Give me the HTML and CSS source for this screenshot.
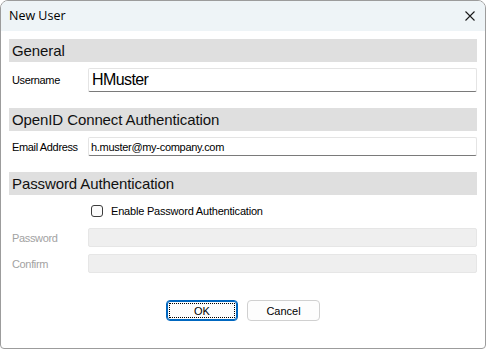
FILE: index.html
```html
<!DOCTYPE html>
<html>

<head>
  <meta name="viewport" content="width=device-width, initial-scale=1">
  <link rel="stylesheet" href="styles.css">
</head>

<body>
  <div class="window">
    <header class="titlebar">
      <span class="title">New User</span>
      <svg class="close" viewBox="0 0 10 10" width="10" height="10">
        <path d="M0.5 0.5 L9.5 9.5 M9.5 0.5 L0.5 9.5" />
      </svg>
    </header>

    <main class="content">
      <section class="group">
        <h2 class="band">General</h2>
        <div class="row row--big">
          <label class="label">Username</label>
          <input class="field field--big" type="text" value="HMuster">
        </div>
      </section>

      <section class="group">
        <h2 class="band">OpenID Connect Authentication</h2>
        <div class="row">
          <label class="label">Email Address</label>
          <input class="field" type="text" value="h.muster@my-company.com">
        </div>
      </section>

      <section class="group">
        <h2 class="band">Password Authentication</h2>
        <div class="row row--check">
          <span class="check"></span>
          <span class="check-text">Enable Password Authentication</span>
        </div>
        <div class="row">
          <label class="label label--off">Password</label>
          <input class="field field--off" type="password" disabled>
        </div>
        <div class="row row--tight">
          <label class="label label--off">Confirm</label>
          <input class="field field--off" type="password" disabled>
        </div>
      </section>

      <!-- OK has keyboard focus, hence the dotted rectangle -->
      <div class="buttons">
        <button class="btn btn--default"><span class="focus">OK</span></button>
        <button class="btn">Cancel</button>
      </div>
    </main>
  </div>
</body>

</html>
```

FILE: styles.css
```css
:root {
  --band-color: #dfdfdf;
  --label-off: #a2a2a2;
  --ui-font: "Liberation Sans", Arial, sans-serif;
}

html,
body {
  margin: 0;
  background: #ffffff;
}

body {
  font-family: var(--ui-font);
  color: #000000;
}

.window {
  box-sizing: border-box;
  width: 486px;
  height: 349px;
  border: 1px solid #9c9c9c;
  border-radius: 8px 8px 4px 4px;
  overflow: hidden;
  display: flex;
  flex-direction: column;
  background: #ffffff;
}

.titlebar {
  height: 30px;
  flex: none;
  background: #eef4f7;
  display: flex;
  align-items: center;
  justify-content: space-between;
  padding: 0 10px 0 8px;
}

.title {
  font-family: "Open Sans", var(--ui-font);
  font-size: 12.5px;
  margin-top: -1px;
}

.close {
  margin-top: -1px;
}

.close path {
  stroke: #1a1a1a;
  stroke-width: 1.1;
  fill: none;
}

.content {
  flex: 1;
  padding: 8px 8px 0 8px;
  display: flex;
  flex-direction: column;
}

.group {
  margin-bottom: 16px;
}

.band {
  margin: 0;
  height: 23px;
  background: var(--band-color);
  font-size: 15px;
  font-weight: normal;
  letter-spacing: -0.1px;
  line-height: 23px;
  padding-left: 3px;
  color: #111111;
}

.row {
  display: flex;
  align-items: center;
  margin-top: 6px;
}

.row--tight {
  margin-top: 7px;
}

.row--check {
  margin-top: 10px;
  margin-bottom: 11px;
  padding-left: 82px;
  height: 12px;
}

.label {
  width: 79px;
  flex: none;
  padding-left: 3px;
  box-sizing: border-box;
  font-size: 11px;
  letter-spacing: -0.35px;
}

.label--off {
  color: var(--label-off);
}

.field {
  flex: 1;
  min-width: 0;
  box-sizing: border-box;
  height: 19px;
  margin: 0;
  padding: 0 2px;
  border: 1px solid #e4e4e4;
  border-bottom-color: #7a7a7a;
  border-radius: 2px;
  font-family: var(--ui-font);
  font-size: 11px;
  letter-spacing: -0.3px;
  color: #000000;
  background: #ffffff;
  outline: none;
}

.field--big {
  height: 24px;
  padding: 0 3px;
  font-size: 16px;
  letter-spacing: -0.6px;
}

.field--off {
  background: #efefef;
  border-color: #e6e6e6;
}

.check {
  width: 12px;
  height: 12px;
  box-sizing: border-box;
  border: 1px solid #3c3c3c;
  border-radius: 3px;
  background: #fbfbfb;
  flex: none;
}

.check-text {
  margin-left: 8px;
  font-size: 11px;
  letter-spacing: -0.2px;
}

.group:last-of-type {
  margin-bottom: 0;
}

.buttons {
  display: flex;
  justify-content: center;
  gap: 9px;
  margin-top: 27px;
}

.btn {
  box-sizing: border-box;
  width: 73px;
  height: 21px;
  padding: 0;
  border: 1px solid #d0d0d0;
  border-radius: 4px;
  background: #fdfdfd;
  font-family: var(--ui-font);
  font-size: 11px;
  color: #000000;
}

.btn--default {
  width: 72px;
  border-color: #0067c0;
  box-shadow: inset 0 0 0 1px #0067c0;
  padding: 2px;
  display: flex;
}

.focus {
  flex: 1;
  border: 1px dotted #000000;
  display: flex;
  align-items: center;
  justify-content: center;
}
```
